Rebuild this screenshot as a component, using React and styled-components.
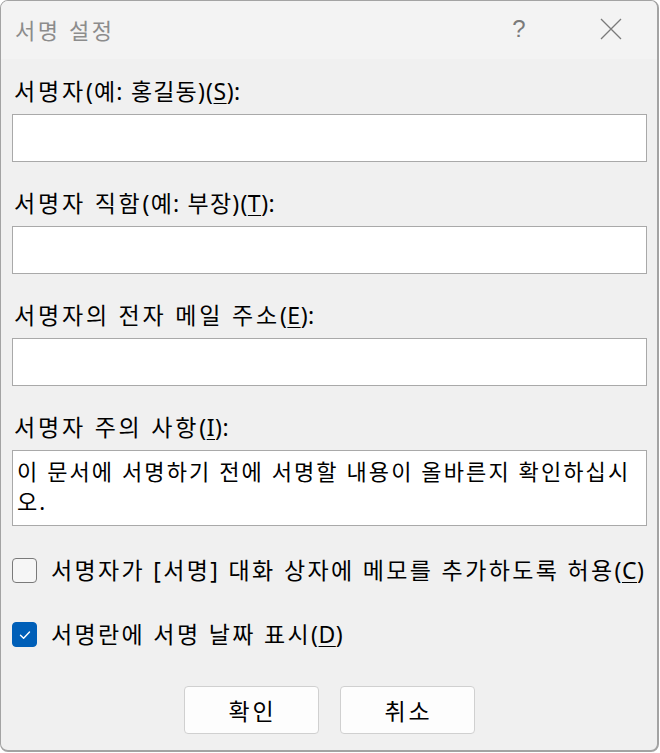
import React from "react";
import styled, { createGlobalStyle } from "styled-components";

const GlobalStyle = createGlobalStyle`
  html, body {
    margin: 0;
    padding: 0;
    background: #ffffff;
  }
  body {
    font-family: "Noto Sans", "Noto Sans CJK KR", sans-serif;
  }
`;

const FIELDS = [
  { name: "서명자", hint: "(예: 홍길동)", key: "S" },
  { name: "서명자 직함", hint: "(예: 부장)", key: "T" },
  { name: "서명자의 전자 메일 주소", key: "E" },
];

// accelerator like "(S):" with the letter underlined
const Mnemonic = ({ k, colon }) => (
  <Accel>
    (<u>{k}</u>){colon ? ":" : ""}
  </Accel>
);

const App = () => {
  return (
    <>
      <GlobalStyle />
      <Window>
        <TitleBar>
          <TitleText>서명 설정</TitleText>
          <TitleButtons>
            <HelpButton>?</HelpButton>
            <CloseButton>
              <svg width="22" height="22" viewBox="0 0 22 22">
                <path d="M1 1 L21 21 M21 1 L1 21" stroke="#7a7a7a" strokeWidth="1.3" fill="none" />
              </svg>
            </CloseButton>
          </TitleButtons>
        </TitleBar>

        <Body>
          {FIELDS.map(f => (
            <Field key={f.key}>
              <Label>
                {f.name}
                {f.hint && <Hint>{f.hint}</Hint>}
                <Mnemonic k={f.key} colon />
              </Label>
              <Input />
            </Field>
          ))}

          <Field>
            <Label>
              서명자 주의 사항
              <Mnemonic k="I" colon />
            </Label>
            <TextBox>
              이 문서에 서명하기 전에 서명할 내용이 올바른지 확인하십시
              <br />
              오.
            </TextBox>
          </Field>

          <Checks>
            <CheckRow>
              <CheckBox />
              <CheckText>
                서명자가 [서명] 대화 상자에 메모를 추가하도록 허용
                <Mnemonic k="C" />
              </CheckText>
            </CheckRow>
            <CheckRow>
              <CheckBox checked>
                <svg width="14" height="14" viewBox="0 0 14 14">
                  <path d="M2.5 7.2 L5.6 10.2 L11.5 4" stroke="#ffffff" strokeWidth="1.4" fill="none" strokeLinecap="round" strokeLinejoin="round" />
                </svg>
              </CheckBox>
              <CheckText>
                서명란에 서명 날짜 표시
                <Mnemonic k="D" />
              </CheckText>
            </CheckRow>
          </Checks>

          <Buttons>
            <Button>확인</Button>
            <Button>취소</Button>
          </Buttons>
        </Body>
      </Window>
    </>
  );
};

export default App;

const Window = styled.div`
  box-sizing: border-box;
  width: 659px;
  height: 752px;
  background-color: #f0f0f0;
  border: 1px solid #a3a3a3;
  border-right-width: 2px;
  border-bottom-width: 2px;
  border-radius: 8px;
  overflow: hidden;
  color: #000;
`;

const TitleBar = styled.div`
  display: flex;
  align-items: center;
  justify-content: space-between;
  height: 58px;
  padding-left: 14px;
  background-color: #f3f3f3;
`;

const TitleText = styled.span`
  font-size: 22px;
  letter-spacing: 2.6px;
  color: #8c8c8c;
  margin-top: -2px;
`;

const TitleButtons = styled.div`
  display: flex;
  align-items: center;
  height: 100%;
`;

const HelpButton = styled.span`
  width: 92px;
  text-align: center;
  font-family: "Liberation Sans", sans-serif;
  font-size: 24px;
  color: #7a7a7a;
  margin-top: -2px;
`;

const CloseButton = styled.span`
  display: flex;
  justify-content: center;
  width: 92px;
  margin-top: -2px;
`;

const Body = styled.div`
  display: flex;
  flex-direction: column;
  padding: 18px 10px 0 11px;
`;

const Field = styled.div`
  display: flex;
  flex-direction: column;
  margin-bottom: 27px;
`;

const Accel = styled.span`
  letter-spacing: 0.5px;

  u {
    text-underline-offset: 3px;
    text-decoration-thickness: 1px;
  }
`;

const Hint = styled.span`
  letter-spacing: 1.2px;
`;

const Label = styled.div`
  height: 28px;
  line-height: 28px;
  margin-bottom: 9px;
  padding-left: 2px;
  font-size: 23px;
  letter-spacing: 2.8px;
  white-space: nowrap;
`;

const Input = styled.div`
  box-sizing: border-box;
  height: 48px;
  background-color: #ffffff;
  border: 1px solid #a9a9a9;
`;

const TextBox = styled.div`
  box-sizing: border-box;
  height: 76px;
  padding: 5px 4px;
  background-color: #ffffff;
  border: 1px solid #a9a9a9;
  font-size: 22px;
  line-height: 30px;
  letter-spacing: 2.1px;
  white-space: nowrap;
`;

const Checks = styled.div`
  display: flex;
  flex-direction: column;
  gap: 37px;
  margin-top: 4px;
`;

const CheckRow = styled.div`
  display: flex;
  align-items: center;
  gap: 14px;
`;

const CheckBox = styled.span`
  box-sizing: border-box;
  flex-shrink: 0;
  display: flex;
  align-items: center;
  justify-content: center;
  width: 25px;
  height: 25px;
  border-radius: 4px;
  border: 1px solid ${props => (props.checked ? "#005fb8" : "#7a7a7a")};
  background-color: ${props => (props.checked ? "#005fb8" : "#f6f6f6")};
`;

const CheckText = styled.span`
  font-size: 23px;
  line-height: 27px;
  letter-spacing: 2.35px;
  white-space: nowrap;
`;

const Buttons = styled.div`
  display: flex;
  justify-content: center;
  gap: 21px;
  margin-top: 38px;
`;

const Button = styled.button`
  box-sizing: border-box;
  width: 135px;
  height: 48px;
  padding: 0 0 0 2px;
  background-color: #fdfdfd;
  border: 1px solid #d0d0d0;
  border-radius: 4px;
  font-family: "Noto Sans", "Noto Sans CJK KR", sans-serif;
  font-size: 23px;
  letter-spacing: 2.8px;
  color: #000;
`;
